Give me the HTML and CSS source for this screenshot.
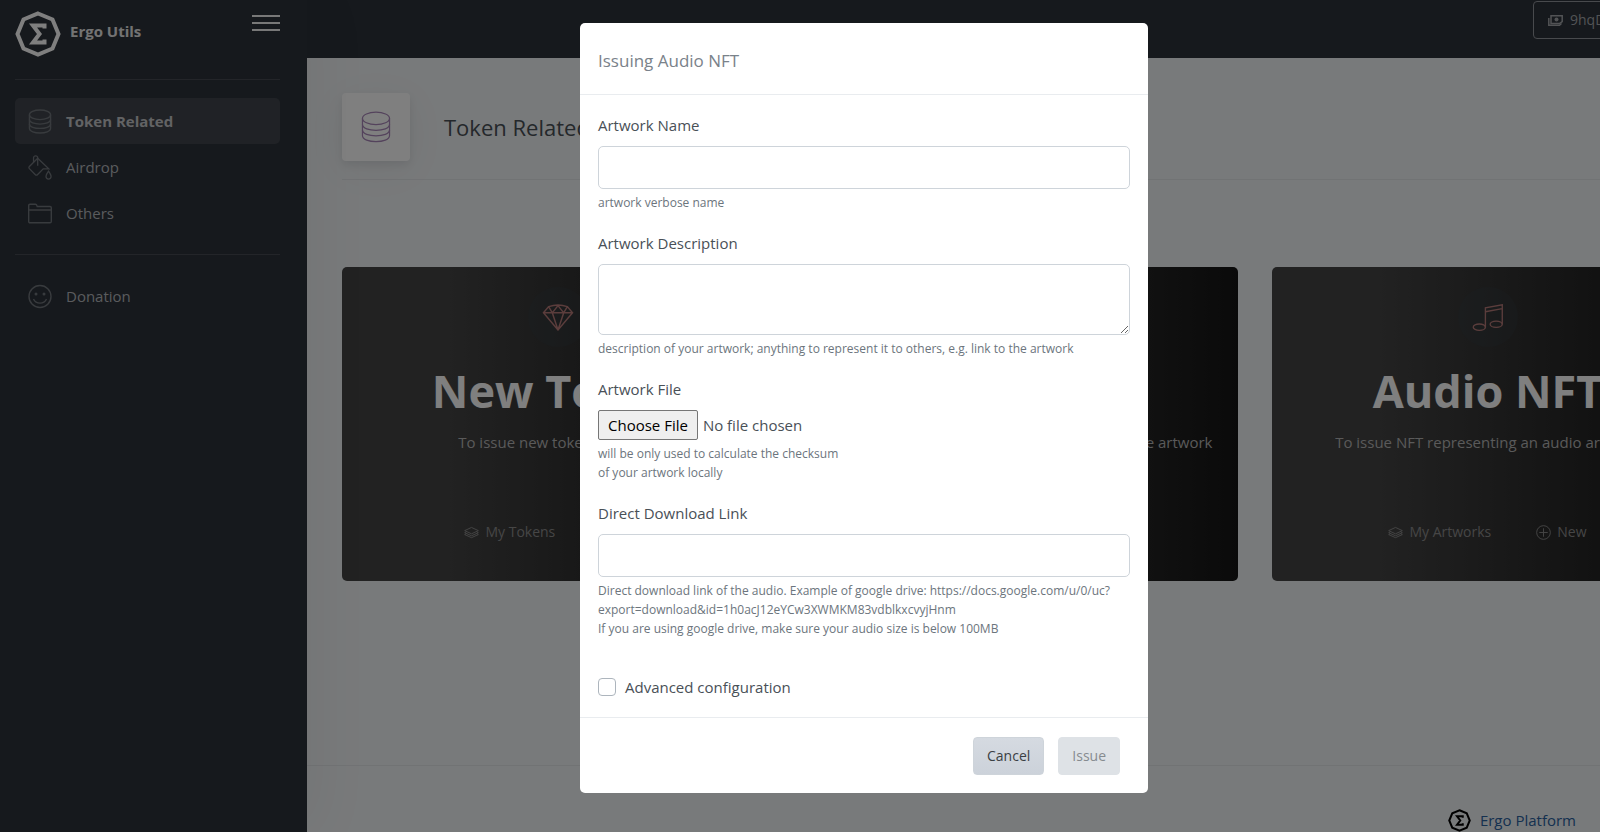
FILE: index.html
```html
<!DOCTYPE html>
<html lang="en">
<head>
    <meta charset="UTF-8">
    <meta name="viewport" content="width=device-width, initial-scale=1.0">
    <title>Ergo Utils</title>
    <link rel="stylesheet" href="styles.css">
</head>
<body>
    <svg class="sprite" aria-hidden="true">
        <symbol id="ergo" viewBox="0 0 46 46">
            <path d="M23 2.5L37.5 8.5L43.5 23L37.5 37.5L23 43.5L8.5 37.5L2.5 23L8.5 8.5Z" fill="none" stroke="currentColor" stroke-width="4"/>
            <path d="M29.500 17.500V14.500H18L24.500 23L18 31.500H29.500V28.500" fill="none" stroke="currentColor" stroke-width="4"/>
        </symbol>
        <symbol id="database" viewBox="0 0 24 26">
            <g fill="none" stroke="currentColor">
                <ellipse cx="12" cy="6" rx="11" ry="5"/>
                <path d="M1 6V20C1 26.600 23 26.600 23 20V6"/>
                <path d="M1 11C1 17.200 23 17.200 23 11M1 15.500C1 21.800 23 21.800 23 15.500"/>
            </g>
        </symbol>
        <symbol id="paint" viewBox="0 0 26 27">
            <g fill="none" stroke="currentColor">
                <path d="M10.500 3.500L1.500 12.500C.8 13.200 .8 14 1.500 14.700L8 21.300C8.700 22 9.500 22 10.200 21.300L16.500 15H22.500Z"/>
                <path d="M6 8V3C6 .3 10.500 .3 10.500 3V11.500"/>
                <path d="M22.200 17.500C24.200 20.300 25 21.500 25 23C25 27 19.500 27 19.500 23C19.500 21.500 20.200 20.300 22.200 17.500Z"/>
            </g>
        </symbol>
        <symbol id="folder" viewBox="0 0 24 20">
            <path d="M.7 2Q.7 .7 2 .7H7.500Q8.500 .7 8.800 1.800L9.200 3H22Q23.300 3 23.300 4.300V18Q23.300 19.300 22 19.300H2Q.7 19.300 .7 18ZM.7 6.500H23.300" fill="none" stroke="currentColor"/>
        </symbol>
        <symbol id="smile" viewBox="0 0 24 24">
            <circle cx="12" cy="12" r="11" fill="none" stroke="currentColor"/>
            <circle cx="8" cy="9.500" r="1.500" fill="currentColor"/>
            <circle cx="16" cy="9.500" r="1.500" fill="currentColor"/>
            <path d="M5.500 14.500C8 20 16 20 18.500 14.500" fill="none" stroke="currentColor"/>
        </symbol>
        <symbol id="diamond" viewBox="0 0 30 26">
            <path d="M1 8.500L6 2.500Q15 -.5 24 2.500L29 8.500L15 25ZM1 8.500H29M6 2.500L9.500 8.500L15 1.500L20.500 8.500L24 2.500M9.500 8.500L15 25L20.500 8.500" fill="none" stroke="currentColor"/>
        </symbol>
        <symbol id="music" viewBox="0 0 32 28">
            <g fill="none" stroke="currentColor">
                <ellipse cx="7" cy="24" rx="6.300" ry="3.300"/>
                <ellipse cx="24.500" cy="21" rx="6.300" ry="3.300"/>
                <path d="M13.300 24V4L30.800 .8V21M13.300 8L30.800 4.800"/>
            </g>
        </symbol>
        <symbol id="image" viewBox="0 0 30 26">
            <path d="M1 1H29V25H1ZM1 20L10 11L17 18L22 13L29 20" fill="none" stroke="currentColor"/>
        </symbol>
        <symbol id="layers" viewBox="0 0 16 12">
            <path d="M8 .6L15.300 4L8 7.400L.7 4ZM2.500 5.300L.7 6.200L8 9.500L15.300 6.200L13.500 5.300M2.500 7.200L.7 8.200L8 11.500L15.300 8.200L13.500 7.200" fill="none" stroke="currentColor"/>
        </symbol>
        <symbol id="plus" viewBox="0 0 16 16">
            <path d="M8 3.500V12.500M3.500 8H12.500" stroke="currentColor"/>
            <circle cx="8" cy="8" r="7.300" fill="none" stroke="currentColor"/>
        </symbol>
        <symbol id="cash" viewBox="0 0 15 11">
            <path d="M3 .8H14.200V6.500L11.500 8.500H3Z" fill="none" stroke="currentColor" stroke-width="1.500"/>
            <path d="M.8 3V10.200H11.500L13.500 8.500" fill="none" stroke="currentColor" stroke-width="1.500"/>
            <circle cx="8.500" cy="4.600" r="2" fill="currentColor"/>
        </symbol>
    </svg>

    <div class="app">
        <aside class="sidebar">
            <div class="brand">
                <svg class="brand-logo"><use href="#ergo"/></svg>
                <span class="brand-name">Ergo Utils</span>
                <button class="hamburger" type="button" aria-label="Toggle menu"><span></span><span></span><span></span></button>
            </div>
            <nav class="menu">
                <a class="menu-item active" href="#tokens"><svg><use href="#database"/></svg>Token Related</a>
                <a class="menu-item" href="#airdrop"><svg><use href="#paint"/></svg>Airdrop</a>
                <a class="menu-item" href="#others"><svg><use href="#folder"/></svg>Others</a>
            </nav>
            <nav class="menu">
                <a class="menu-item" href="#donation"><svg><use href="#smile"/></svg>Donation</a>
            </nav>
        </aside>

        <div class="content">
            <header class="topbar">
                <button class="wallet" type="button"><svg><use href="#cash"/></svg>9hqDcxkQ...vP7hnE</button>
            </header>
            <main class="main">
                <div class="page-title">
                    <div class="title-icon"><svg><use href="#database"/></svg></div>
                    <h1>Token Related</h1>
                </div>
                <div class="cards">
                    <section class="card">
                        <div class="card-icon"><svg><use href="#diamond"/></svg></div>
                        <h2>New Token</h2>
                        <p>To issue new tokens on Ergo</p>
                        <div class="card-actions">
                            <a href="#my-tokens"><svg><use href="#layers"/></svg>My Tokens</a>
                            <a href="#new-token"><svg><use href="#plus"/></svg>New</a>
                        </div>
                    </section>
                    <section class="card">
                        <div class="card-icon"><svg><use href="#image"/></svg></div>
                        <h2>Image NFT</h2>
                        <p>To issue NFT representing an image or picture artwork</p>
                        <div class="card-actions">
                            <a href="#my-pictures"><svg><use href="#layers"/></svg>My Artworks</a>
                            <a href="#new-picture"><svg><use href="#plus"/></svg>New</a>
                        </div>
                    </section>
                    <section class="card">
                        <div class="card-icon"><svg><use href="#music"/></svg></div>
                        <h2>Audio NFT</h2>
                        <p>To issue NFT representing an audio artwork</p>
                        <div class="card-actions">
                            <a href="#my-audio"><svg><use href="#layers"/></svg>My Artworks</a>
                            <a href="#new-audio"><svg><use href="#plus"/></svg>New</a>
                        </div>
                    </section>
                </div>
            </main>
            <footer class="footer">
                <a href="#ergo-platform"><svg><use href="#ergo"/></svg>Ergo Platform</a>
            </footer>
        </div>

        <div class="backdrop">
            <form class="modal" role="dialog" aria-labelledby="modalTitle">
                <div class="modal-header">
                    <h5 id="modalTitle">Issuing Audio NFT</h5>
                </div>
                <div class="modal-body">
                    <div class="form-group">
                        <label for="artName">Artwork Name</label>
                        <input class="form-control" id="artName" type="text">
                        <small>artwork verbose name</small>
                    </div>
                    <div class="form-group">
                        <label for="artDesc">Artwork Description</label>
                        <textarea class="form-control" id="artDesc"></textarea>
                        <small>description of your artwork; anything to represent it to others, e.g. link to the artwork</small>
                    </div>
                    <div class="form-group">
                        <label for="artFile">Artwork File</label>
                        <input class="form-file" id="artFile" type="file">
                        <small>will be only used to calculate the checksum<br>of your artwork locally</small>
                    </div>
                    <div class="form-group">
                        <label for="artLink">Direct Download Link</label>
                        <input class="form-control" id="artLink" type="text">
                        <small>Direct download link of the audio. Example of google drive: https://docs.google.com/u/0/uc?<br>export=download&amp;id=1h0acJ12eYCw3XWMKM83vdblkxcvyjHnm<br>If you are using google drive, make sure your audio size is below 100MB</small>
                    </div>
                    <div class="form-check">
                        <input id="advanced" type="checkbox">
                        <label for="advanced">Advanced configuration</label>
                    </div>
                </div>
                <div class="modal-footer">
                    <button class="btn btn-cancel" type="button">Cancel</button>
                    <button class="btn btn-issue" type="submit" disabled>Issue</button>
                </div>
            </form>
        </div>
    </div>
</body>
</html>
```
FILE: styles.css
```css
* {
    box-sizing: border-box;
}

html {
    overflow: hidden;
}

body {
    margin: 0;
    font-family: "Open Sans", "Noto Sans", sans-serif;
    font-size: 15px;
    line-height: 26px;
    color: #495057;
}

a {
    color: inherit;
    text-decoration: none;
}

button,
input,
textarea {
    font: inherit;
}

.sprite {
    display: none;
}

.app {
    position: relative;
    display: flex;
    min-width: 1728px;
    height: 100vh;
    overflow: hidden;
    background: #f1f4f6;
}

/* sidebar */
.sidebar {
    width: 307px;
    flex-shrink: 0;
    padding: 11px 27px 0 15px;
    background: #2c323a;
    box-shadow: 7px 0 60px rgba(0, 0, 0, 0.05);
    z-index: 1;
}

.brand {
    display: flex;
    align-items: flex-start;
    height: 68px;
}

.brand-logo {
    width: 46px;
    height: 46px;
    color: #fff;
}

.brand-name {
    margin: 7px auto 0 9px;
    font-weight: 700;
    color: #e6e6e6;
}

.hamburger {
    display: flex;
    flex-direction: column;
    gap: 5px;
    width: 28px;
    margin-top: 4px;
    padding: 0;
    border: 0;
    background: none;
}

.hamburger span {
    height: 2px;
    background: #f0f0f0;
}

.menu {
    padding: 18px 0;
    border-top: 1px solid #464b52;
}

.menu-item {
    display: flex;
    align-items: center;
    height: 46px;
    padding-left: 13px;
    border-radius: 5px;
    color: #b4b7ba;
}

.menu-item svg {
    width: 24px;
    height: 25px;
    margin-right: 14px;
    color: #71767c;
    stroke-width: 1.4;
}

.menu-item.active {
    background: #40454c;
    color: #c4c6c8;
    font-weight: 700;
}

/* content */
.content {
    flex: 1;
    display: flex;
    flex-direction: column;
}

.topbar {
    display: flex;
    justify-content: flex-end;
    align-items: flex-start;
    height: 58px;
    padding: 1px 25px 0 0;
    background: #2c323a;
}

.wallet {
    display: flex;
    align-items: center;
    width: 170px;
    height: 38px;
    padding: 0 14px;
    border: 1px solid #90949a;
    border-radius: 4px;
    background: none;
    color: #a4a7aa;
    font-size: 14px;
    white-space: nowrap;
    overflow: hidden;
}

.wallet svg {
    flex-shrink: 0;
    width: 15px;
    height: 11px;
    margin-right: 7px;
}

.main {
    flex: 1;
    padding: 35px 25px 0 35px;
}

.page-title {
    display: flex;
    align-items: center;
    padding-bottom: 18px;
    border-bottom: 1px solid #e3e6e9;
}

.title-icon {
    display: flex;
    align-items: center;
    justify-content: center;
    width: 68px;
    height: 68px;
    margin-right: 34px;
    border-radius: 4px;
    background: #fff;
    color: #a886b8;
    box-shadow: 0 8px 40px rgba(4, 9, 20, 0.05), 0 4px 8px rgba(4, 9, 20, 0.08);
}

.title-icon svg {
    width: 30px;
    height: 32px;
}

.page-title h1 {
    margin: 0;
    font-size: 22px;
    font-weight: 400;
}

.cards {
    display: grid;
    grid-template-columns: repeat(3, 1fr);
    gap: 34px;
    margin-top: 87px;
}

.card {
    display: flex;
    flex-direction: column;
    align-items: center;
    height: 314px;
    padding: 20px 20px 36px;
    border-radius: 5px;
    background: linear-gradient(to right, #444 25%, #151515);
    color: #b4b4b4;
}

.card-icon {
    display: flex;
    align-items: center;
    justify-content: center;
    width: 60px;
    height: 60px;
    border-radius: 50%;
    background: rgba(52, 62, 70, 0.3);
    color: #b67a78;
    stroke-width: 1.4;
}

.card-icon svg {
    width: 32px;
    height: 27px;
}

.card h2 {
    margin: 14px 0 8px;
    font-size: 45px;
    line-height: 60px;
    color: #fff;
}

.card p {
    margin: 0;
}

.card-actions {
    display: flex;
    gap: 45px;
    margin-top: auto;
    font-size: 14px;
    color: #8c8c8c;
}

.card-actions a {
    display: flex;
    align-items: center;
    gap: 6px;
}

.card-actions svg {
    width: 15px;
    height: 15px;
}

.footer {
    display: flex;
    justify-content: flex-end;
    height: 67px;
    padding: 41px 152px 0 0;
    border-top: 1px solid #e3e6e9;
    color: #2a62a0;
}

.footer a {
    display: flex;
    align-items: center;
    height: 26px;
}

.footer svg {
    width: 23px;
    height: 23px;
    margin-right: 9px;
    color: #000;
}

/* modal */
.backdrop {
    position: absolute;
    inset: 0;
    z-index: 2;
    display: flex;
    justify-content: center;
    align-items: flex-start;
    padding-top: 23px;
    background: rgba(0, 0, 0, 0.5);
}

.modal {
    width: 568px;
    border-radius: 5px;
    background: #fff;
}

.modal-header {
    padding: 25px 18px 20px;
    border-bottom: 1px solid #e9ecef;
}

.modal-header h5 {
    margin: 0;
    font-size: 17px;
    font-weight: 400;
    color: #7a828a;
}

.modal-body {
    padding: 17px 18px;
}

.form-group {
    margin-bottom: 18px;
}

.form-group label {
    display: block;
    margin-bottom: 8px;
}

.form-control {
    display: block;
    width: 100%;
    height: 43px;
    padding: 6px 12px;
    border: 1px solid #ced4da;
    border-radius: 5px;
    background: #fff;
    color: #495057;
}

textarea.form-control {
    height: 71px;
    resize: vertical;
}

.form-file {
    display: block;
    width: 100%;
    height: 30px;
    line-height: 26px;
}

.form-file::file-selector-button {
    height: 30px;
    margin-right: 5px;
    padding: 0 9px;
    border: 1px solid #767676;
    border-radius: 2px;
    background: #efefef;
    color: #000;
    font: inherit;
}

.form-group small {
    display: block;
    margin-top: 4px;
    font-size: 12px;
    line-height: 19px;
    color: #6c757d;
}

.form-check {
    display: flex;
    align-items: center;
    gap: 9px;
    margin-top: 36px;
}

.form-check input {
    appearance: none;
    width: 18px;
    height: 18px;
    margin: 0;
    border: 1px solid #adb5bd;
    border-radius: 4px;
    background: #fff;
}

.modal-footer {
    display: flex;
    justify-content: flex-end;
    gap: 14px;
    padding: 19px 28px 18px;
    border-top: 1px solid #e9ecef;
}

.btn {
    height: 38px;
    padding: 0 13px;
    border: 1px solid #ced4da;
    border-radius: 4px;
    font-size: 14px;
}

.btn-cancel {
    background: linear-gradient(#d5dae1, #ccd2da);
    color: #3a3f44;
}

.btn-issue {
    border-color: #dee2e6;
    background: #dee2e6;
    color: #868b90;
}
```
